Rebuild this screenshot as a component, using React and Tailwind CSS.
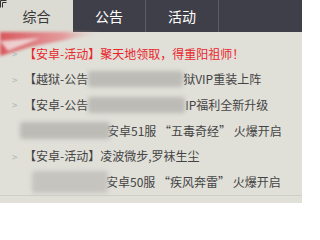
const tabs = ['综合', '公告', '活动']

function Blur({ className }) {
  return (
    <span className={`inline-block align-middle rounded-[3px] bg-[#bcbbb6] blur-[2px] ${className}`} />
  )
}

function Arrow({ show = true }) {
  return (
    <span className={`w-[12px] text-[10px] text-[#b4b4b0] ${show ? '' : 'invisible'}`}>&gt;</span>
  )
}

export default function App() {
  return (
    <div className="w-[302px] h-[203px] overflow-hidden bg-[#e0dfd8] font-['Noto_Sans_CJK_SC',sans-serif]">
      {/* tabs */}
      <div className="relative flex h-[32px] bg-[#3f3f49]">
        <svg className="absolute left-0 top-0" width="8" height="8" viewBox="0 0 8 8">
          <path d="M0.5 0.5h6M0.5 0.5v7M2.5 2.5h4M2.5 2.5v5" stroke="#333" strokeWidth="1" fill="none" />
        </svg>
        {tabs.map((t, i) => (
          <div
            key={t}
            className={`w-[73px] flex items-center justify-center text-[14px] ${
              i === 0 ? 'bg-[#dcdbd3] text-[#3a3a3a]' : 'text-white border-r border-[#5c5c68]'
            }`}
          >
            {t}
          </div>
        ))}
      </div>

      {/* list */}
      <div className="relative h-[164px] border-b border-[#cfcec7] pt-[9px] pl-[12px] text-[12px] text-[#444]">
        <svg className="absolute left-0 top-0 blur-[1.5px]" width="110" height="30" viewBox="0 0 110 30">
          <defs>
            <linearGradient id="streak" x1="0" y1="0" x2="1" y2="0">
              <stop offset="0" stopColor="#d6464e" stopOpacity="0.9" />
              <stop offset="0.6" stopColor="#e47c80" stopOpacity="0.7" />
              <stop offset="1" stopColor="#e0dfd8" stopOpacity="0" />
            </linearGradient>
          </defs>
          <path d="M0 0 L105 0 L70 7 L30 15 L0 24 Z" fill="url(#streak)" />
          <path d="M0 9 L40 6 L8 19 Z" fill="#f4f2f0" opacity="0.75" />
        </svg>

        <div className="relative flex items-center h-[25.6px] text-[#e8262b]">
          <Arrow />
          <span>【安卓-活动】聚天地领取，得重阳祖师！</span>
        </div>
        <div className="flex items-center h-[25.6px]">
          <Arrow />
          <span>【越狱-公告</span>
          <Blur className="w-[95px] h-[16px]" />
          <span>狱VIP重装上阵</span>
        </div>
        <div className="flex items-center h-[25.6px]">
          <Arrow />
          <span>【安卓-公告</span>
          <Blur className="w-[97px] h-[16px]" />
          <span>IP福利全新升级</span>
        </div>
        <div className="flex items-center h-[25.6px]">
          <Blur className="ml-[8px] w-[90px] h-[17px]" />
          <span className="-ml-[3px]">安卓51服 “五毒奇经” 火爆开启</span>
        </div>
        <div className="flex items-center h-[25.6px]">
          <Arrow />
          <span>【安卓-活动】凌波微步,罗袜生尘</span>
        </div>
        <div className="flex items-center h-[25.6px]">
          <Blur className="ml-[20px] w-[76px] h-[22px] bg-[#c5c4bf]" />
          <span className="-ml-[2px]">安卓50服 “疾风奔雷” 火爆开启</span>
        </div>
      </div>
    </div>
  )
}
